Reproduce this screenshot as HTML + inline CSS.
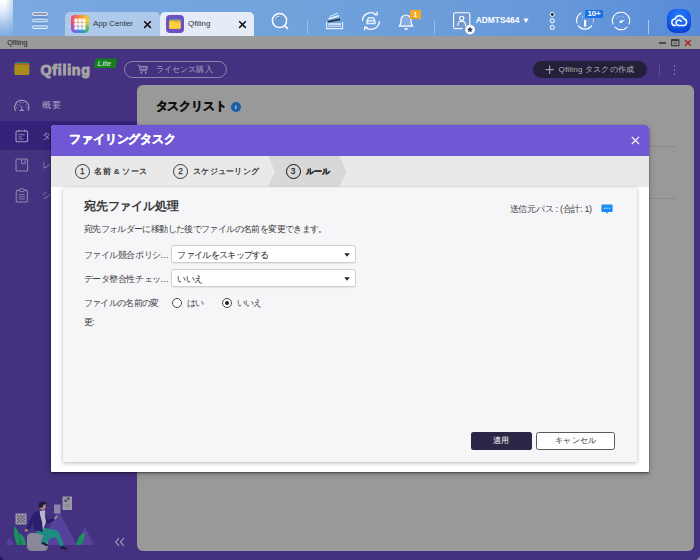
<!DOCTYPE html>
<html lang="ja">
<head>
<meta charset="utf-8">
<title>Qfiling</title>
<style>
*{box-sizing:border-box;margin:0;padding:0}
html,body{width:700px;height:560px;overflow:hidden;background:#44317f;font-family:"Liberation Sans",sans-serif;}
body{position:relative}
.abs{position:absolute}
#topbar{left:0;top:0;width:700px;height:36px;background:linear-gradient(to right,#7ba9e1 0%,#70a2dc 44%,#6698d9 80%,#578bd8 100%)}
#edge{left:0;top:0;width:13px;height:36px;background:linear-gradient(to right,rgba(123,169,225,0) 40%,rgba(123,169,225,.4) 100%),linear-gradient(to bottom,#ffffff 0%,#f3f7fd 16%,#cfdff5 45%,#9dbfea 75%,#7eabe2 100%)}
.tab{top:12px;height:24px;border-radius:5px 5px 0 0}
.tabtxt{font-size:7.9px;color:#2a3240;top:18.9px;line-height:10px;white-space:nowrap}
#titlebar{left:0;top:36px;width:700px;height:12.600px;background:#9a9a9a}
#apphead{left:0;top:49px;width:700px;height:511px;background:#44317f}
#main{left:137px;top:85px;width:557.300px;height:465.600px;background:#999999;border-radius:6px}
.side{font-size:9px;color:#a29bbd;line-height:12px;white-space:nowrap}
#dlg{left:51.200px;top:125px;width:597.800px;height:346.500px;background:#ffffff;border-radius:4px 4px 1px 1px;box-shadow:0 1px 2px rgba(0,0,0,.5),0 2px 6px rgba(0,0,0,.22);overflow:hidden}
#dlghead{left:0;top:0;width:598px;height:31px;background:#7058d4}
#steps{left:0;top:31px;width:598px;height:31px;background:#e9e9e9}
#inner{left:11.600px;top:63.300px;width:574.300px;height:274px;background:#f6f6f9;box-shadow:0 1px 4px rgba(0,0,0,.28)}
.t{font-size:9px;letter-spacing:-.46px;color:#404040;white-space:nowrap;line-height:12px}
.sel{background:#fff;border:1px solid #cfcfcf;border-radius:2.5px;left:108.4px;width:184.4px;height:17.8px;box-shadow:0 1px 1px rgba(0,0,0,.07)}
.stepc{width:15px;height:15px;border:1px solid #3a3a3a;border-radius:50%;font-size:8.3px;font-weight:normal;-webkit-text-stroke:.25px #333;color:#333;text-align:center;line-height:13px;top:7.5px}
.stept{font-size:8px;color:#2e2e2e;-webkit-text-stroke:.25px #2e2e2e;top:9.500px;line-height:12px;white-space:nowrap}
</style>
</head>
<body>
<!-- ===== top task bar ===== -->
<div id="topbar" class="abs"></div>
<div id="edge" class="abs"></div>
<svg class="abs" style="left:30px;top:10px" width="20" height="22" viewBox="0 0 20 22">
  <rect x="2.400" y="5.800" width="15.200" height="3.200" fill="#6894d2"/>
  <rect x="2.400" y="12.200" width="15.200" height="3" fill="#6d9ad8"/>
  <rect x="2.400" y="2.700" width="15.200" height="2.600" rx="1.300" fill="#7c8ba3" stroke="#f4f8fd" stroke-width=".9"/>
  <rect x="2.400" y="9.200" width="15.200" height="2.600" rx="1.300" fill="#7aa5dc" stroke="#f4f8fd" stroke-width=".9"/>
  <rect x="2.400" y="15.900" width="15.200" height="2.600" rx="1.300" fill="#80aadf" stroke="#f4f8fd" stroke-width=".9"/>
</svg>
<!-- tab 1 -->
<div class="abs tab" style="left:65px;width:95px;background:#afc9ea"></div>
<svg class="abs" style="left:71px;top:15px" width="18" height="18" viewBox="0 0 18 18">
  <defs>
    <linearGradient id="acb" x1="0" y1="0" x2="1" y2="0"><stop offset="0" stop-color="#a24fd8"/><stop offset=".5" stop-color="#3f86ee"/><stop offset="1" stop-color="#45c252"/></linearGradient>
    <linearGradient id="act" x1="0" y1="0" x2="1" y2="0"><stop offset="0" stop-color="#f0486c"/><stop offset=".45" stop-color="#f58a3c"/><stop offset="1" stop-color="#f4d62c"/></linearGradient>
    <linearGradient id="acm" x1="0" y1="0" x2="0" y2="1"><stop offset="0" stop-color="#fff"/><stop offset=".35" stop-color="#fff"/><stop offset=".8" stop-color="#000"/></linearGradient>
    <mask id="acmask"><rect width="18" height="18" fill="url(#acm)"/></mask>
    <clipPath id="acclip"><rect width="18" height="18" rx="4.200"/></clipPath>
  </defs>
  <g clip-path="url(#acclip)"><rect width="18" height="18" fill="url(#acb)"/><rect width="18" height="18" fill="url(#act)" mask="url(#acmask)"/></g>
  <g fill="#fff"><rect x="3.400" y="3.600" width="3.300" height="3.300"/><rect x="7.350" y="3.600" width="3.300" height="3.300"/><rect x="11.300" y="3.600" width="3.300" height="3.300"/>
  <rect x="3.400" y="7.500" width="3.300" height="3.300"/><rect x="7.350" y="7.500" width="3.300" height="3.300"/><rect x="11.300" y="7.500" width="3.300" height="3.300"/>
  <rect x="3.400" y="11.400" width="3.300" height="3.300"/><rect x="7.350" y="11.400" width="3.300" height="3.300"/><rect x="11.300" y="11.400" width="3.300" height="3.300"/></g>
</svg>
<div class="abs tabtxt" style="left:93px">App Center</div>
<svg class="abs" style="left:143px;top:19.5px" width="9" height="9" viewBox="0 0 9 9"><path d="M1.200 1.300 L7.800 7.900 M7.800 1.300 L1.200 7.900" stroke="#111" stroke-width="1.500" fill="none"/></svg>
<!-- tab 2 -->
<div class="abs tab" style="left:160px;width:94px;background:#e6ecf7"></div>
<svg class="abs" style="left:166px;top:15px" width="18" height="18" viewBox="0 0 18 18">
  <rect width="18" height="18" rx="4" fill="#6f4fc4"/>
  <rect x="3.3" y="4.2" width="11.4" height="9.6" rx="1.2" fill="#2fb7a8"/>
  <rect x="3.3" y="5.2" width="11.4" height="8.6" rx="1.2" fill="#f7a13a"/>
  <path d="M3.3 7.2 q0-1 1-1 h3.5 l1 1 h4.9 q1 0 1 1 v4.4 q0 1.2-1.2 1.2 h-9 q-1.2 0-1.2-1.2z" fill="#fbd23c"/>
</svg>
<div class="abs tabtxt" style="left:188px">Qfiling</div>
<svg class="abs" style="left:237.5px;top:19.5px" width="9" height="9" viewBox="0 0 9 9"><path d="M1.200 1.300 L7.800 7.900 M7.800 1.300 L1.200 7.900" stroke="#111" stroke-width="1.500" fill="none"/></svg>
<!-- search -->
<svg class="abs" style="left:268px;top:9px" width="24" height="24" viewBox="0 0 24 24">
  <circle cx="11.500" cy="11.500" r="7.100" fill="#6d9bd6" stroke="#fff" stroke-width="1.500"/>
  <path d="M7.800 10.400 a4 4 0 0 1 3.600-3.200" stroke="#f2f7fd" stroke-width="1" fill="none"/>
  <path d="M8.900 10.700 a3 3 0 0 1 2.700-2.400" stroke="#3c5a86" stroke-width=".8" fill="none"/>
  <path d="M16.800 16.900 L19.400 19.400" stroke="#fff" stroke-width="1.700" stroke-linecap="round"/>
</svg>
<div class="abs" style="left:307px;top:20px;width:1px;height:14px;background:rgba(255,255,255,.3)"></div>
<!-- stack icon -->
<svg class="abs" style="left:324px;top:11px" width="22" height="20" viewBox="0 0 22 20">
  <path d="M5.500 5.600 L13.800 2.200" stroke="#dfeafa" stroke-width="1" fill="none"/>
  <path d="M4.400 8 L15 4.800" stroke="#f2f7fd" stroke-width="1.500" fill="none"/>
  <path d="M4.200 10.600 L16.200 8.400" stroke="#243450" stroke-width="1.700" fill="none"/>
  <path d="M4.200 13 H17" stroke="#fff" stroke-width="1.300"/>
  <path d="M4.200 15.200 H17" stroke="#dfeafa" stroke-width="1"/>
  <path d="M2.600 11 V17.600 H18.600 V11" stroke="#e6effb" stroke-width="1.100" fill="none"/>
</svg>
<!-- sync icon -->
<svg class="abs" style="left:360px;top:10px" width="22" height="22" viewBox="0 0 22 22">
  <path d="M2.4 11 a8.4 8.4 0 0 1 14.2-6" stroke="#fff" stroke-width="1.2" fill="none"/>
  <path d="M19.4 11 a8.4 8.4 0 0 1 -14.2 6" stroke="#fff" stroke-width="1.2" fill="none"/>
  <path d="M14.2 4.6 h3 v-3" stroke="#fff" stroke-width="1.2" fill="none"/>
  <path d="M7.6 17.4 h-3 v3" stroke="#fff" stroke-width="1.2" fill="none"/>
  <path d="M7 10.8 l1.5-3 h5 l1.5 3 v3 h-8z" fill="#8db3e4" stroke="#fff" stroke-width="1.1"/>
  <path d="M7 11 h8" stroke="#fff" stroke-width="1"/>
</svg>
<!-- bell -->
<svg class="abs" style="left:396px;top:10px" width="20" height="22" viewBox="0 0 20 22">
  <path d="M3.2 16.2 c1.6-1.4 1.8-3 1.8-6.2 a5 5 0 0 1 10 0 c0 3.200.2 4.800 1.800 6.200z" fill="#86aee2" stroke="#fff" stroke-width="1.2" stroke-linejoin="round"/>
  <path d="M8 18.300 a2 1.600 0 0 0 4 0z" fill="#fff"/>
</svg>
<div class="abs" style="left:409.500px;top:9.500px;width:11.500px;height:9px;background:#f5a623;color:#fff;font-size:7.500px;font-weight:bold;text-align:center;line-height:9px">1</div>
<div class="abs" style="left:433.500px;top:20px;width:1px;height:13.500px;background:rgba(255,255,255,.3)"></div>
<!-- user -->
<svg class="abs" style="left:451px;top:10px" width="26" height="26" viewBox="0 0 26 26">
  <path d="M2.600 17.500 V4.400 q0-1.600 1.600-1.600 h13 q1.600 0 1.600 1.600 v11" fill="#7099d2" stroke="#fff" stroke-width="1.100"/>
  <path d="M2.600 18.600 H11.500" stroke="#fff" stroke-width="1.100"/>
  <circle cx="10.700" cy="8.300" r="2.100" fill="none" stroke="#fff" stroke-width="1.100"/>
  <path d="M6.900 16 v-1.600 a3.800 3.300 0 0 1 7.600 0 v1.600" fill="none" stroke="#fff" stroke-width="1.100"/>
  <circle cx="19" cy="19.600" r="4.900" fill="#fff"/>
  <path d="M19 16.600 l.900 1.950 2.100.25 -1.550 1.450 .4 2.100 -1.850-1.050 -1.850 1.050 .4-2.100 -1.550-1.450 2.100-.25z" fill="#2c3e5c"/>
</svg>
<div class="abs" style="left:475.800px;top:14.800px;font-size:8.350px;font-weight:bold;color:#fff;line-height:10px;white-space:nowrap">ADMTS464</div>
<svg class="abs" style="left:522.700px;top:18.300px" width="6" height="5.400" viewBox="0 0 6 5.400"><path d="M.4.500 h5.200 L3 4.900z" fill="#fff"/></svg>
<!-- dots -->
<svg class="abs" style="left:548px;top:11px" width="9" height="20" viewBox="0 0 9 20">
  <circle cx="4.300" cy="3.400" r="2.100" fill="#2a3550" stroke="#fff" stroke-width="1"/>
  <circle cx="4.300" cy="9.800" r="2.100" fill="#7aa3db" stroke="#fff" stroke-width="1"/>
  <circle cx="4.300" cy="16.400" r="2.100" fill="#7aa3db" stroke="#fff" stroke-width="1"/>
</svg>
<!-- info -->
<svg class="abs" style="left:574.800px;top:10px" width="22" height="22" viewBox="0 0 22 22">
  <path d="M6.400 2.800 A8.500 8.500 0 0 0 2 13.400" fill="none" stroke="#fff" stroke-width="1.100"/>
  <path d="M3 15.400 A8.500 8.500 0 0 0 17 15.400" fill="none" stroke="#fff" stroke-width="1.100"/>
  <path d="M18 13.400 A8.500 8.500 0 0 0 18.300 8.600" fill="none" stroke="rgba(255,255,255,.45)" stroke-width="1"/>
  <rect x="9" y="9.800" width="2.200" height="7" rx=".7" fill="#fff"/>
  <path d="M7.800 6.200 q-.7.700 0 1.500" stroke="#e6effb" stroke-width=".7" fill="none"/>
  <path d="M18.500 8.300 v1.600" stroke="#e6effb" stroke-width=".7"/>
</svg>
<div class="abs" style="left:585.300px;top:9.700px;width:17.400px;height:8px;background:#1a70e8;color:#fff;font-size:8px;font-weight:bold;text-align:center;line-height:8.400px;letter-spacing:-.2px;overflow:hidden">10+</div>
<!-- gauge -->
<svg class="abs" style="left:610px;top:10px" width="22" height="22" viewBox="0 0 22 22">
  <path d="M3.200 14.400 a8.600 8.600 0 1 1 15.600 0" fill="none" stroke="#fff" stroke-width="1.100"/>
  <path d="M4.600 16.800 a8.600 8.600 0 0 0 12.800 0" fill="none" stroke="#fff" stroke-width="1.100"/>
  <path d="M6.200 8.500 l.7.500 M8.300 6.500 l.4.800 M11 5.800 v.900 M13.700 6.500 l-.4.800" stroke="#fff" stroke-width=".8"/>
  <path d="M10.300 11.200 l5-2 -3.600 3.600z" fill="#fff"/>
  <circle cx="10.800" cy="11.800" r="1.300" fill="#fff"/>
</svg>
<div class="abs" style="left:648px;top:20px;width:1px;height:14px;background:rgba(255,255,255,.5)"></div>
<!-- cloud -->
<svg class="abs" style="left:666px;top:8px" width="26" height="26" viewBox="0 0 26 26">
  <defs><radialGradient id="cg" cx=".5" cy=".32" r=".75"><stop offset="0" stop-color="#2f82f8"/><stop offset=".55" stop-color="#1660ec"/><stop offset="1" stop-color="#0836c4"/></radialGradient></defs>
  <rect x="1" y="1" width="24" height="24" rx="8.500" fill="url(#cg)"/>
  <path d="M9.300 17.600 a3.300 3.300 0 0 1 -.3-6.600 a4.600 4.600 0 0 1 8.800-.2 a3.500 3.500 0 0 1 .2 6.800 h-5.200 a2.800 2.800 0 1 1 2.400-4.400" fill="none" stroke="#fff" stroke-width="1.500" stroke-linecap="round" stroke-linejoin="round"/>
</svg>

<!-- ===== window title bar ===== -->
<div id="titlebar" class="abs"></div>
<div class="abs" style="left:7.200px;top:38.500px;font-size:7.200px;color:#1c1c1c;line-height:8px">Qfiling</div>
<div class="abs" style="left:659px;top:42px;width:7px;height:1.500px;background:#4a4a4a"></div>
<svg class="abs" style="left:670.500px;top:39px" width="9" height="8" viewBox="0 0 9 8"><rect x=".6" y=".7" width="7.300" height="6" fill="none" stroke="#3a3a3a" stroke-width="1.100"/><path d="M.6 1.300 h7.300" stroke="#3a3a3a" stroke-width="1.600"/><rect x="2.600" y="3" width="3.400" height="2.600" fill="#777"/></svg>
<svg class="abs" style="left:684px;top:39px" width="8" height="8" viewBox="0 0 8 8"><path d="M1 1 L6.800 6.800 M6.800 1 L1 6.800" stroke="#a81c1c" stroke-width="1.250" fill="none"/></svg>

<!-- ===== app ===== -->
<div id="apphead" class="abs"></div>
<!-- logo -->
<svg class="abs" style="left:14px;top:60.800px" width="16" height="15" viewBox="0 0 17 16">
  <rect x=".6" y="1" width="15.600" height="13.600" rx="1.600" fill="#1e7f86"/>
  <rect x=".6" y="2.400" width="15.600" height="12.400" rx="1.600" fill="#b06a1e"/>
  <path d="M.6 5.200 q0-1 1-1 h13.600 q1 0 1 1 v8 q0 1.600-1.600 1.600 h-12.400 q-1.600 0-1.600-1.600z" fill="#ab8b1c"/>
</svg>
<div class="abs" style="left:40.500px;top:61px;font-size:14.300px;font-weight:bold;color:#a6a6a6;-webkit-text-stroke:.95px #a6a6a6;line-height:18px;letter-spacing:.7px">Qfiling</div>
<svg class="abs" style="left:93px;top:58px" width="26" height="11" viewBox="0 0 26 11"><path d="M2.600 .6 H24 L22.400 10 H1z" fill="#13801d"/></svg>
<div class="abs" style="left:97.500px;top:59px;font-size:7.600px;font-weight:bold;font-style:italic;color:#b9d8bb;line-height:9px">Lite</div>
<!-- license pill -->
<div class="abs" style="left:124px;top:61px;width:102.500px;height:17px;border:1px solid #8d86ad;border-radius:9px"></div>
<svg class="abs" style="left:137px;top:64px" width="12" height="11" viewBox="0 0 12 11"><path d="M.5 1.200 h1.700 l1.200 5.600 h6 l1-4.200 h-7.600" fill="none" stroke="#a9a3c2" stroke-width=".9"/><path d="M3.600 4 h6.600 M3.800 5.400 h6" stroke="#a9a3c2" stroke-width=".6"/><circle cx="4.300" cy="8.800" r=".9" fill="#a9a3c2"/><circle cx="8.700" cy="8.800" r=".9" fill="#a9a3c2"/></svg>
<div class="abs" style="left:155.500px;top:63.500px;font-size:8px;letter-spacing:.17px;color:#a9a3c2;line-height:12px;white-space:nowrap">ライセンス購入</div>
<!-- create pill -->
<div class="abs" style="left:533px;top:61px;width:114px;height:17px;background:#24203a;border-radius:9px"></div>
<svg class="abs" style="left:545px;top:65px" width="10" height="10" viewBox="0 0 10 10"><path d="M4.700 .5 v8.400 M.5 4.700 h8.400" stroke="#b5b5b5" stroke-width="1"/></svg>
<div class="abs" style="left:558.500px;top:63.500px;font-size:8px;letter-spacing:.2px;color:#b0b0b4;line-height:12px;white-space:nowrap">Qfiling タスクの作成</div>
<div class="abs" style="left:658.500px;top:63.500px;width:1px;height:12.500px;background:#5b4a92"></div>
<div class="abs" style="left:673.500px;top:64.800px;width:1.800px;height:1.800px;border-radius:50%;background:#8a82ad;box-shadow:0 4px 0 #8a82ad,0 8px 0 #8a82ad"></div>

<!-- sidebar -->
<div class="abs" style="left:0;top:121px;width:137px;height:29.200px;background:#342178"></div>
<svg class="abs" style="left:13px;top:98px" width="18" height="16" viewBox="0 0 18 16">
  <path d="M2.600 12.800 a7.100 7.100 0 1 1 12.400 0" fill="none" stroke="#a8a1c2" stroke-width="1.100"/>
  <path d="M6.400 12.400 h4.800" stroke="#a8a1c2" stroke-width="1"/>
  <path d="M8.800 12 v-2.600 l-2-2.200" fill="none" stroke="#a8a1c2" stroke-width="1"/>
  <path d="M3.200 9.600 l1.100.3 M4.300 6.300 l.9.700 M6.600 4.300 l.5 1 M8.800 3.800 v1.100 M11 4.300 l-.5 1 M13.300 6.300 l-.9.700 M14.400 9.600 l-1.100.3" stroke="#a8a1c2" stroke-width=".9"/>
</svg>
<div class="abs side" style="left:41.800px;top:98.800px;letter-spacing:.8px;color:#a8a1c2">概要</div>
<svg class="abs" style="left:15px;top:129px" width="14" height="14" viewBox="0 0 14 14">
  <rect x="1" y="2" width="11.600" height="10.800" rx="1.300" fill="none" stroke="#a29bbd" stroke-width="1.100"/>
  <path d="M4 .8 v2.200 M9.600 .8 v2.200" stroke="#a29bbd" stroke-width="1.100"/>
  <path d="M3.400 5.700 h6.200 M3.400 7.900 h3.800 M3.400 10.100 h5" stroke="#a29bbd" stroke-width=".8"/>
</svg>
<div class="abs side" style="left:41.800px;top:129.500px">タスク</div>
<svg class="abs" style="left:15px;top:158px" width="14" height="14" viewBox="0 0 14 14">
  <rect x="1" y="1" width="11.600" height="12" rx="1.300" fill="none" stroke="#8f87ae" stroke-width="1.100"/>
  <path d="M6.600 1.200 v4.400 h3.600 v-4.400" fill="none" stroke="#8f87ae" stroke-width="1"/>
</svg>
<div class="abs side" style="left:41.800px;top:159px;color:#8f87ae">レポート</div>
<svg class="abs" style="left:15px;top:188px" width="14" height="15" viewBox="0 0 14 15">
  <rect x="1.200" y="2.400" width="11.200" height="11.600" rx="1.300" fill="none" stroke="#8f87ae" stroke-width="1.100"/>
  <rect x="4.400" y=".8" width="4.800" height="2.800" rx=".8" fill="#44317f" stroke="#8f87ae" stroke-width="1"/>
  <path d="M3.800 6.600 h6 M3.800 8.800 h6 M3.800 11 h6" stroke="#8f87ae" stroke-width=".9"/>
</svg>
<div class="abs side" style="left:41.800px;top:189px;color:#8f87ae">システム</div>

<!-- illustration -->
<svg class="abs" style="left:0;top:490px" width="138" height="70" viewBox="0 0 138 70">
  <path d="M6 55 L9.500 47 L14 55z" fill="#56429c"/>
  <path d="M40 55 L58 20 L77 55z" fill="#56429c"/>
  <path d="M76 55 L85 37 L94 55z" fill="#56429c"/>
  <rect x="54" y="14.500" width="6.500" height="9" fill="#8a84ad"/>
  <rect x="62.500" y="6.500" width="9.500" height="13.500" fill="#9b9aa8"/>
  <path d="M65 11.500 l4-3.500 M69 8 h-2.200 M69 8 v2.200 M65 11.500 h2.200 M65 11.500 v-2.200" stroke="#3c3663" stroke-width=".9" fill="none"/>
  <rect x="64.500" y="13.500" width="5.500" height="4" fill="#8c8b9a"/>
  <rect x="15.500" y="23.500" width="11" height="11" fill="#9b9aa6"/>
  <g fill="#5d5a78"><rect x="17" y="25" width="1.600" height="1.600"/><rect x="20.200" y="25" width="1.600" height="1.600"/><rect x="23.400" y="25" width="1.600" height="1.600"/><rect x="18.600" y="26.600" width="1.600" height="1.600"/><rect x="21.800" y="26.600" width="1.600" height="1.600"/><rect x="17" y="28.200" width="1.600" height="1.600"/><rect x="20.200" y="28.200" width="1.600" height="1.600"/><rect x="23.400" y="28.200" width="1.600" height="1.600"/><rect x="18.600" y="29.800" width="1.600" height="1.600"/><rect x="21.800" y="29.800" width="1.600" height="1.600"/><rect x="17" y="31.400" width="1.600" height="1.600"/><rect x="20.200" y="31.400" width="1.600" height="1.600"/><rect x="23.400" y="31.400" width="1.600" height="1.600"/></g>
  <path d="M14 36 q6 4 6 19 h-3 q-4-9-3-19z M19 43 q6 2 7 12 h-5z" fill="#1c8f5f"/>
  <path d="M76 55 q2-10 9-13 q0 8-4 13z" fill="#1c8f5f"/>
  <rect x="27" y="43" width="21" height="18" rx="4.500" fill="#8a8799"/>
  <path d="M36 40 q3-3 9-2 l10 2 q4 1 5 5 l4 10 -3.500 1 -5-9 -6 2 -4 6 -5-2 3-8 -6-1z" fill="#1d8c82"/>
  <path d="M43 52 l5 2.500 -.8 2 -6-3z M61.500 56 l5.500 2 -.6 1.800 -6-1.300z" fill="#1f1a33"/>
  <path d="M40 21 l5-1 1 12 -3 8 h-5z" fill="#b9b7c6"/>
  <path d="M39 21 q-6 1-8 7 l-5 11 3 1 4-7 1 7 9 2 -1-10z M44.500 22 l3 8 6-2 1 2.600 -8 4z" fill="#2a1f6e"/>
  <path d="M54 28 l3-2.500 1 1 -2.500 3z" fill="#a8897a"/>
  <path d="M24.500 40 l2.500-1.500 1 2 -2.500 1.500z" fill="#a8897a"/>
  <circle cx="42.500" cy="16.500" r="3.200" fill="#a8897a"/>
  <path d="M38.500 15.500 q0-4 4.500-4 q3.500 0 3.500 2.500 l-3 .5 -1 3 -3 .5z" fill="#211b3a"/>
  <path d="M119 48.200 l-3.300 3.800 3.300 3.800 M123.800 48.200 l-3.300 3.800 3.300 3.800" fill="none" stroke="#a7a1c0" stroke-width="1.100"/>
</svg>

<svg class="abs" style="left:696px;top:556px" width="4" height="4" viewBox="0 0 4 4"><path d="M4 .5 V4 H.5z" fill="#8680a6"/></svg>
<svg class="abs" style="left:0;top:555px" width="5" height="5" viewBox="0 0 5 5"><path d="M0 1 L4 5 H0z" fill="#221848"/></svg>
<!-- main panel -->
<div id="main" class="abs"></div>
<div class="abs" style="left:155.500px;top:97.800px;font-size:12px;letter-spacing:-.2px;font-weight:bold;color:#111;-webkit-text-stroke:.4px #111;line-height:16px;white-space:nowrap">タスクリスト</div>
<div class="abs" style="left:231px;top:102.200px;width:9.500px;height:9.500px;border-radius:50%;background:#1b5fa7;color:#cfd8e4;font-size:6.500px;font-weight:bold;text-align:center;line-height:9.500px;font-family:'Liberation Serif',serif">i</div>
<div class="abs" style="left:600px;top:146px;width:76px;height:1px;background:#8a8a8a"></div>
<div class="abs" style="left:600px;top:198px;width:76px;height:1px;background:#8a8a8a"></div>

<!-- ===== dialog ===== -->
<div id="dlg" class="abs">
  <div id="dlghead" class="abs"></div>
  <div class="abs" style="left:18.300px;top:6.300px;font-size:12px;letter-spacing:-.22px;font-weight:bold;color:#fff;-webkit-text-stroke:.4px #fff;line-height:17px;white-space:nowrap">ファイリングタスク</div>
  <svg class="abs" style="left:579.500px;top:10.500px" width="9" height="9" viewBox="0 0 9 9"><path d="M.8.800 L8 8 M8 .8 L.8 8" stroke="#fff" stroke-width="1.100" fill="none"/></svg>
  <div id="steps" class="abs">
    <svg class="abs" style="left:215px;top:0" width="84" height="31" viewBox="0 0 84 31"><path d="M2 0 H73.500 L80.500 15.500 L73.500 31 H2 L9 15.500z" fill="#d8d8d8"/></svg>
    <div class="abs stepc" style="left:23.500px">1</div>
    <div class="abs stept" style="left:43.300px;font-weight:bold;letter-spacing:.31px;-webkit-text-stroke:0;color:#383838">名前 &amp; ソース</div>
    <div class="abs stepc" style="left:121.800px">2</div>
    <div class="abs stept" style="left:141.800px;font-weight:bold;letter-spacing:.26px;-webkit-text-stroke:0;color:#383838">スケジューリング</div>
    <div class="abs stepc" style="left:234.400px;border-color:#111;color:#111">3</div>
    <div class="abs stept" style="left:254.600px;font-weight:bold;color:#111;letter-spacing:.1px">ルール</div>
  </div>
  <div id="inner" class="abs">
    <div class="abs" style="left:21px;top:9.500px;font-size:12px;letter-spacing:-.1px;font-weight:bold;color:#383838;line-height:16px;white-space:nowrap">宛先ファイル処理</div>
    <div class="abs t" style="left:21px;top:35px;letter-spacing:-.62px">宛先フォルダーに移動した後でファイルの名前を変更できます。</div>
    <div class="abs t" style="left:21px;top:60.500px">ファイル競合ポリシ<span style="letter-spacing:.2px">...</span></div>
    <div class="abs sel" style="top:57.200px"></div>
    <div class="abs t" style="left:114.700px;top:60.500px;color:#222;letter-spacing:-.7px">ファイルをスキップする</div>
    <svg class="abs" style="left:281px;top:64.500px" width="6" height="4" viewBox="0 0 6 4"><path d="M.3.300 h5.400 L3 3.800z" fill="#222"/></svg>
    <div class="abs t" style="left:21px;top:84.500px">データ整合性チェッ<span style="letter-spacing:.2px">...</span></div>
    <div class="abs sel" style="top:81.200px"></div>
    <div class="abs t" style="left:114.700px;top:84.500px;color:#222;letter-spacing:-.9px">いいえ</div>
    <svg class="abs" style="left:281px;top:88.500px" width="6" height="4" viewBox="0 0 6 4"><path d="M.3.300 h5.400 L3 3.800z" fill="#222"/></svg>
    <div class="abs t" style="left:21px;top:106px;line-height:18.500px;letter-spacing:-.67px">ファイルの名前の変<br>更:</div>
    <div class="abs" style="left:108.800px;top:109.400px;width:10.400px;height:10.400px;border:1px solid #484848;border-radius:50%;background:#fff"></div>
    <div class="abs t" style="left:124px;top:108.500px;letter-spacing:-1px">はい</div>
    <div class="abs" style="left:158.900px;top:109.400px;width:10.400px;height:10.400px;border:1px solid #484848;border-radius:50%;background:#fff"></div>
    <div class="abs" style="left:161.800px;top:112.300px;width:4.600px;height:4.600px;border-radius:50%;background:#222"></div>
    <div class="abs t" style="left:174px;top:108.500px;letter-spacing:-.87px">いいえ</div>
    <div class="abs t" style="left:447px;top:15px;letter-spacing:-.3px">送信元パス : (合計: 1)</div>
    <svg class="abs" style="left:538.500px;top:16px" width="12" height="11" viewBox="0 0 12 11"><path d="M1.300 .4 h9.400 q.9 0 .9.900 v5.800 q0 .9-.9.900 h-3.600 l-1.200 1.800 -1.200-1.800 h-3.400 q-.9 0-.9-.9 v-5.800 q0-.9.900-.9z" fill="#1b8df2"/><circle cx="3.500" cy="4.200" r=".7" fill="#cfe6fb"/><circle cx="6" cy="4.200" r=".7" fill="#cfe6fb"/><circle cx="8.500" cy="4.200" r=".7" fill="#cfe6fb"/></svg>
    <div class="abs" style="left:408px;top:244px;width:61px;height:17.500px;background:#2b2645;border-radius:2.500px;color:#fff;font-size:8px;text-align:center;line-height:17.500px">適用</div>
    <div class="abs" style="left:473.500px;top:244px;width:79px;height:17.500px;background:#fff;border:1px solid #5a5a5a;border-radius:2.500px;color:#333;font-size:8px;letter-spacing:.2px;text-align:center;line-height:15.500px">キャンセル</div>
  </div>
</div>
</body>
</html>
